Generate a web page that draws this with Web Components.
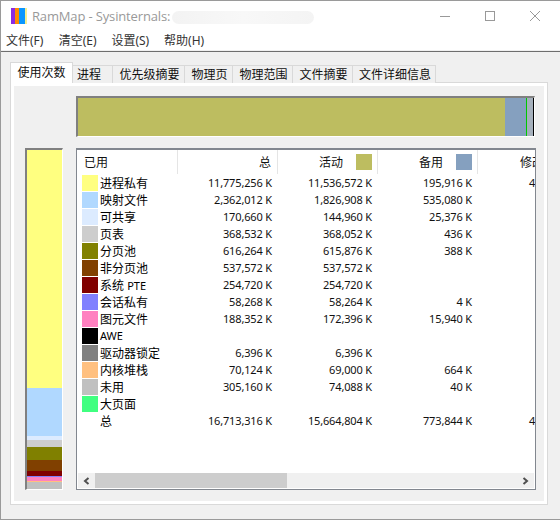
<!DOCTYPE html>
<html><head><meta charset="utf-8">
<style>
html,body{margin:0;padding:0;background:#f0f0f0}
body{width:560px;height:520px;overflow:hidden;font:12px "Noto Sans","Noto Sans CJK SC",sans-serif;color:#000}
</style></head><body>
<rm-window>
  <rm-titlebar title-text="RamMap - Sysinternals:"></rm-titlebar>
  <rm-menu items="文件(F)|清空(E)|设置(S)|帮助(H)"></rm-menu>
  <rm-tabs items="使用次数|进程|优先级摘要|物理页|物理范围|文件摘要|文件详细信息">
    <rm-usage-bar orient="h" style="margin-left:51px" segs="#bdbd60:427,#85a0bf:21,#00c800:1,#a5b0bc:6,#000:1"></rm-usage-bar>
    <div style="display:flex;gap:13px;margin-top:11px">
      <rm-usage-bar orient="v" segs="#ffff80:238,#b0d8ff:48,#dcebff:4,#cdcdcd:7,#808000:13,#804000:11,#800000:5,#8080ff:1,#ff80c0:4,#ffc080:1,#c0c0c0:7"></rm-usage-bar>
      <rm-list></rm-list>
    </div>
  </rm-tabs>
</rm-window>
<script>
function def(name, css, render){
  customElements.define(name, class extends HTMLElement{
    connectedCallback(){
      const s=this.attachShadow({mode:'open'});
      s.innerHTML='<style>'+css+'</style>'+render(this);
    }
  });
}
const sans='"Noto Sans","Noto Sans CJK SC",sans-serif';
def('rm-window',`:host{display:flex;flex-direction:column;box-sizing:border-box;width:560px;height:520px;background:#f0f0f0;border:1px solid #9a9a9a;border-right:0;overflow:hidden}`,()=>'<slot></slot>');
def('rm-titlebar',`
 :host{display:flex;align-items:center;height:30px;background:#fff;flex:none}
 .ic{margin-left:10px;flex:none;display:block}
 .t{margin-left:5px;font:13px "Open Sans",sans-serif;color:#999;white-space:nowrap;letter-spacing:-.15px}
 .blur{margin-left:2px;margin-top:3px;width:142px;height:13px;border-radius:7px;background:linear-gradient(90deg,#f3f3f3,#f8f8f8 50%,#f4f4f4);flex:none}
 .sp{flex:1}
 .b{width:45px;display:flex;justify-content:center;flex:none}
`,h=>`<svg class="ic" width="16" height="16" viewBox="0 0 16 16"><rect x="0" y="0" width="4" height="16" fill="#8a2be2"/><rect x="4" y="0" width="4" height="16" fill="#ff8a00"/><rect x="8" y="0" width="6" height="16" fill="#0a96ff"/><rect x="14" y="0" width="2" height="16" fill="#f4ee90"/></svg>
 <span class="t">${h.getAttribute('title-text')}</span><span class="blur"></span><span class="sp"></span>
 <span class="b"><svg width="10" height="10" viewBox="0 0 10 10"><path d="M0 5.5H10" stroke="#999" fill="none"/></svg></span>
 <span class="b"><svg width="10" height="10" viewBox="0 0 10 10"><rect x=".5" y=".5" width="9" height="9" stroke="#999" fill="none"/></svg></span>
 <span class="b" style="margin-right:3px"><svg width="10" height="10" viewBox="0 0 10 10"><path d="M0 0L10 10M10 0L0 10" stroke="#999" fill="none"/></svg></span>`);
def('rm-menu',`
 :host{display:flex;height:20px;background:#fff;flex:none;border-bottom:1px solid #6e6e6e;box-shadow:inset 0 -1px 0 #f0f0f0;padding-left:5px;gap:0;font:12px ${sans};color:#333}
 span{width:52.7px;line-height:20px;white-space:nowrap}
`,h=>h.getAttribute('items').split('|').map(x=>`<span>${x}</span>`).join(''));
const tabW=[63,40,72,48,60,60,83];
def('rm-tabs',`
 :host{display:flex;flex-direction:column;margin:11px 12px 0 9px;flex:none;font:12px ${sans}}
 .strip{display:flex;height:20px;align-items:flex-end;position:relative;z-index:1;margin-bottom:-1px}
 .tab{box-sizing:border-box;height:18px;border:1px solid #d9d9d9;border-bottom:0;margin-left:-1px;text-align:center;line-height:17px;background:#f0f0f0;white-space:nowrap;color:#111;padding-left:2px}
 .tab.on{height:21px;background:#fff;margin-left:0;line-height:19px;border-color:#d9d9d9;padding-left:0}
 .tab.n2{padding:0 7px 0 0}
 .panel{box-sizing:border-box;height:423px;border:1px solid #d9d9d9;background:#f0f0f0;box-shadow:inset 0 0 0 3px #fff;padding:13px 11px 14px 14px}
`,h=>`<div class="strip">${h.getAttribute('items').split('|').map((x,i)=>`<div class="tab ${i?'':'on'} ${i==1?'n2':''}" style="width:${tabW[i]+(i?1:0)}px">${x}</div>`).join('')}</div><div class="panel"><slot></slot></div>`);
def('rm-usage-bar',`
 :host{display:flex;box-sizing:border-box;flex:none;background:#fff;border:solid #808080;border-right-color:#fff;border-bottom-color:#fff;overflow:hidden}
 :host([orient=h]){width:459px;height:41px;flex-direction:row;border-width:2px 1px 1px 2px}
 :host([orient=v]){width:38px;height:342px;flex-direction:column;border-width:2px 1px 1px 2px}
`,h=>{const v=h.getAttribute('orient')=='v';return h.getAttribute('segs').split(',').map(s=>{const[c,n]=s.split(':');return `<div style="background:${c};flex:none;${v?'height':'width'}:${n}px"></div>`}).join('')});
const rows=[
['进程私有','#ffff80','11,775,256 K','11,536,572 K','195,916 K','42,768 K'],
['映射文件','#b0d8ff','2,362,012 K','1,826,908 K','535,080 K',''],
['可共享','#dcebff','170,660 K','144,960 K','25,376 K',''],
['页表','#cdcdcd','368,532 K','368,052 K','436 K',''],
['分页池','#808000','616,264 K','615,876 K','388 K',''],
['非分页池','#804000','537,572 K','537,572 K','',''],
['系统 <b>PTE</b>','#800000','254,720 K','254,720 K','',''],
['会话私有','#8080ff','58,268 K','58,264 K','4 K',''],
['图元文件','#ff80c0','188,352 K','172,396 K','15,940 K',''],
['<b>AWE</b>','#000000','','','',''],
['驱动器锁定','#808080','6,396 K','6,396 K','',''],
['内核堆栈','#ffc080','70,124 K','69,000 K','664 K',''],
['未用','#c0c0c0','305,160 K','74,088 K','40 K',''],
['大页面','#40ff80','','','',''],
['总','transparent','16,713,316 K','15,664,804 K','773,844 K','42,768 K']];
def('rm-list',`
 :host{display:flex;flex-direction:column;box-sizing:border-box;width:460px;height:342px;background:#fff;border:1px solid #82878f;border-top:2px solid #82878f;border-bottom-width:1px;overflow:hidden;font:11px ${sans};color:#111}
 .body{flex:1;overflow:hidden;min-height:0;padding-left:1px}
 .grid{display:grid;grid-template-columns:100px 100px 100px 100px 100px;width:500px}
 .h{height:24px;display:flex;align-items:center;justify-content:flex-end;padding-right:6px;box-sizing:border-box;border-right:1px solid #e5e5e5;font:12px ${sans};gap:13px}
 .h.l{justify-content:flex-start;padding-left:6px}
 .h i{width:16px;height:16px;flex:none;margin-right:-1px}
 .c{height:17px;line-height:17px;text-align:right;padding-right:6px;box-sizing:border-box;white-space:nowrap;letter-spacing:-.15px}
 .n{display:flex;align-items:center;padding:0 0 0 4px;text-align:left;font:12px ${sans};color:#000;gap:2px;letter-spacing:0}
 .n b{font:11px ${sans}}
 .n i{width:16px;height:16px;flex:none}
 .bar{display:flex;height:15px;margin:0 1px 1px 1px;background:#f0f0f0;flex:none;align-items:center}
 .ar{width:17px;height:15px;display:flex;align-items:center;justify-content:center;flex:none}
 .th{width:192px;height:15px;background:#cdcdcd;flex:none}
 .sp{flex:1}
`,()=>`<div class="body"><div class="grid">
 <div class="h l">已用</div><div class="h">总</div>
 <div class="h">活动<i style="background:#bdbd60"></i></div>
 <div class="h">备用<i style="background:#85a0bf"></i></div>
 <div class="h l" style="padding-left:42px">修改</div>
 ${rows.map(r=>`<div class="c n"><i style="background:${r[1]}"></i><span>${r[0]}</span></div>`+r.slice(2).map(v=>`<div class="c">${v}</div>`).join('')).join('')}
 </div></div>
 <div class="bar"><span class="ar"><svg width="7" height="8" viewBox="0 0 7 8"><path d="M5.5 1L2 4L5.5 7" stroke="#505050" stroke-width="2" fill="none"/></svg></span><span class="th"></span><span class="sp"></span><span class="ar"><svg width="7" height="8" viewBox="0 0 7 8"><path d="M1.5 1L5 4L1.5 7" stroke="#505050" stroke-width="2" fill="none"/></svg></span></div>`);
</script>
</body></html>
